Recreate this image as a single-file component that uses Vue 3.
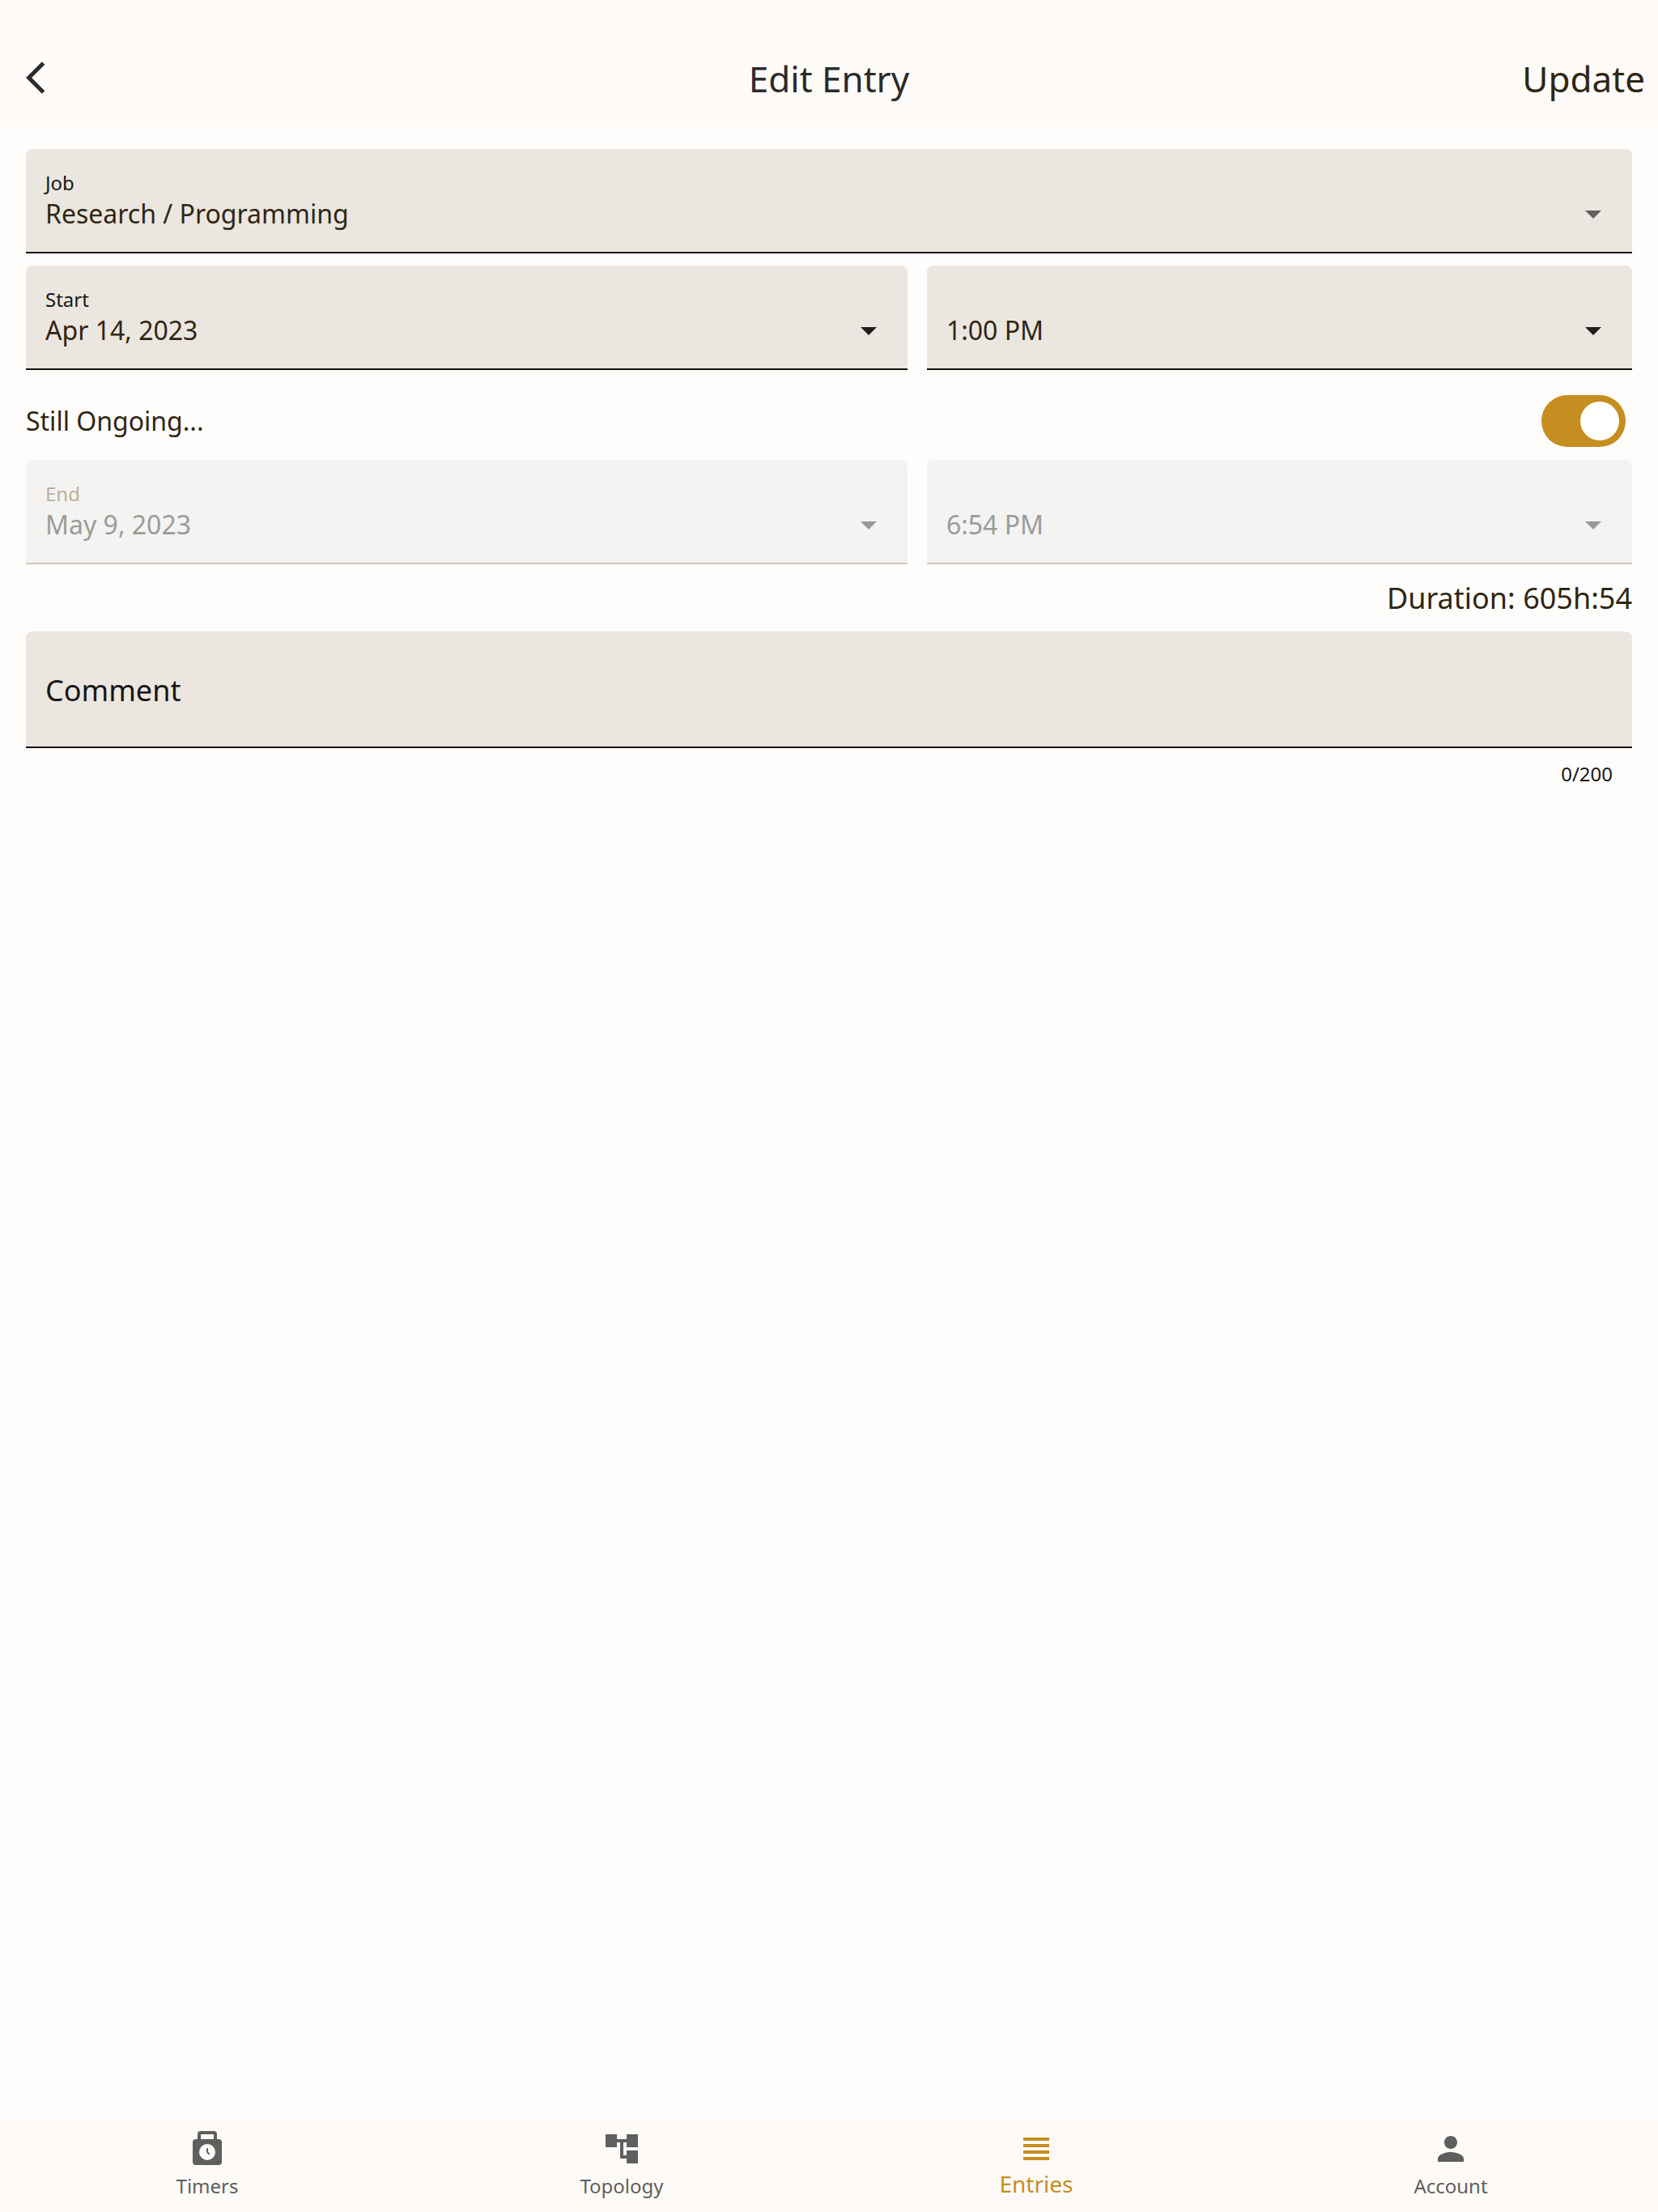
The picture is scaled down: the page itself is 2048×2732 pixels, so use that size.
<script setup>
import { computed, ref } from 'vue'

const COMMENT_LIMIT = 200

const job = ref('Research / Programming')
const startDate = ref('Apr 14, 2023')
const startTime = ref('1:00 PM')
const endDate = ref('May 9, 2023')
const endTime = ref('6:54 PM')
const ongoing = ref(true)
const comment = ref('')

const commentCount = computed(() => `${comment.value.length}/${COMMENT_LIMIT}`)

const tabs = [
  {
    name: 'Timers',
    href: '#timers',
    icon: 'M8 1h8a2 2 0 0 1 2 2v3h1a2 2 0 0 1 2 2v12a2 2 0 0 1-2 2H5a2 2 0 0 1-2-2V8a2 2 0 0 1 2-2h1V3a2 2 0 0 1 2-2zm0 2v3h8V3zm4 6a5 5 0 1 0 0 10a5 5 0 0 0 0-10zm-.5 2.6h1v2.2l1.2 1.4-.7.6-1.5-1.7z',
  },
  {
    name: 'Topology',
    href: '#topology',
    icon: 'M22 11V3h-7v3H9V3H2v8h7V8h2v10h4v3h7v-8h-7v3h-2V8h2v3z',
  },
  {
    name: 'Entries',
    href: '#entries',
    active: true,
    icon: 'M4 15h16v-2H4v2zm0 4h16v-2H4v2zm0-8h16V9H4v2zm0-6v2h16V5H4z',
  },
  {
    name: 'Account',
    href: '#account',
    icon: 'M12 12c2.21 0 4-1.79 4-4s-1.79-4-4-4-4 1.79-4 4 1.79 4 4 4zm0 2c-2.67 0-8 1.34-8 4v2h16v-2c0-2.66-5.33-4-8-4z',
  },
]
</script>

<template>
  <div class="page">
    <header class="toolbar">
      <button class="back" type="button" aria-label="Back">
        <svg viewBox="0 0 24 24" aria-hidden="true">
          <path d="M11.67 3.87 9.9 2.1 0 12l9.9 9.9 1.77-1.77L3.54 12z" />
        </svg>
      </button>
      <h1 class="title">Edit Entry</h1>
      <button class="update" type="submit" form="entry">Update</button>
    </header>

    <main class="content">
      <form id="entry" @submit.prevent>
        <div class="field muted-arrow">
          <label class="field-label" for="job">Job</label>
          <select id="job" v-model="job" class="field-select">
            <option>Research / Programming</option>
          </select>
          <svg class="arrow" viewBox="0 0 20 10" aria-hidden="true"><path d="M0 0h20L10 10z" /></svg>
        </div>

        <div class="row spaced">
          <div class="field">
            <label class="field-label" for="start-date">Start</label>
            <select id="start-date" v-model="startDate" class="field-select">
              <option>Apr 14, 2023</option>
            </select>
            <svg class="arrow" viewBox="0 0 20 10" aria-hidden="true"><path d="M0 0h20L10 10z" /></svg>
          </div>
          <div class="field">
            <select v-model="startTime" class="field-select" aria-label="Start time">
              <option>1:00 PM</option>
            </select>
            <svg class="arrow" viewBox="0 0 20 10" aria-hidden="true"><path d="M0 0h20L10 10z" /></svg>
          </div>
        </div>

        <div class="switch-row spaced">
          <label for="ongoing">Still Ongoing...</label>
          <input id="ongoing" v-model="ongoing" class="switch" type="checkbox" role="switch" />
        </div>

        <div class="row">
          <div class="field" :class="{ disabled: ongoing }">
            <label class="field-label" for="end-date">End</label>
            <select id="end-date" v-model="endDate" class="field-select" :disabled="ongoing">
              <option>May 9, 2023</option>
            </select>
            <svg class="arrow" viewBox="0 0 20 10" aria-hidden="true"><path d="M0 0h20L10 10z" /></svg>
          </div>
          <div class="field" :class="{ disabled: ongoing }">
            <select v-model="endTime" class="field-select" aria-label="End time" :disabled="ongoing">
              <option>6:54 PM</option>
            </select>
            <svg class="arrow" viewBox="0 0 20 10" aria-hidden="true"><path d="M0 0h20L10 10z" /></svg>
          </div>
        </div>

        <p class="duration">Duration: 605h:54</p>

        <div class="field">
          <label v-show="!comment" class="comment-label" for="comment">Comment</label>
          <input id="comment" v-model="comment" class="comment-input" type="text" :maxlength="COMMENT_LIMIT" />
        </div>
        <p class="counter">{{ commentCount }}</p>
      </form>
    </main>

    <nav class="tabs">
      <a
        v-for="tab in tabs"
        :key="tab.name"
        class="tab"
        :class="{ active: tab.active }"
        :href="tab.href"
        :aria-current="tab.active ? 'page' : undefined"
      >
        <svg viewBox="0 0 24 24" aria-hidden="true"><path :d="tab.icon" fill-rule="evenodd" /></svg>
        <span>{{ tab.name }}</span>
      </a>
    </nav>
  </div>
</template>

<style>
body {
  margin: 0;
}
</style>

<style scoped>
.page {
  --surface: #fefdfc;
  --bar: #fefaf8;
  --fill: #ebe6df;
  --ink: #302613;
  --accent: #c68d21;
  display: flex;
  flex-direction: column;
  min-height: 100vh;
  background: var(--surface);
  color: var(--ink);
  font-family: "Noto Sans", sans-serif;
  font-size: 32px;
  line-height: 44px;
}

button,
input,
select {
  margin: 0;
  border: 0;
  padding: 0;
  background: none;
  color: inherit;
  font: inherit;
}

.toolbar {
  display: grid;
  grid-template-columns: 1fr auto 1fr;
  align-items: center;
  height: 112px;
  padding: 40px 16px 0;
  background: var(--bar);
  font-size: 44px;
  line-height: 60px;
}

.back {
  justify-self: start;
  display: flex;
  padding-left: 16px;
  color: #2b2b2d;
}

.back svg {
  width: 48px;
  height: 48px;
  fill: currentColor;
}

.title {
  margin: 0;
  padding-top: 2px;
  color: #2b2b2d;
  font-size: 44px;
  font-weight: 400;
}

.update {
  justify-self: end;
  padding-top: 2px;
}

.content {
  flex: 1;
  padding: 32px;
}

.row {
  display: grid;
  grid-template-columns: 5fr 4fr;
  column-gap: 24px;
}

.spaced {
  margin-top: 15px;
}

/* Label, control and arrow share one grid cell so the whole box is clickable. */
.field {
  display: grid;
  border-bottom: 2px solid #14110f;
  border-radius: 8px 8px 0 0;
  background: var(--fill);
}

.field > * {
  grid-area: 1 / 1;
}

.field-label {
  place-self: start;
  padding: 26px 24px 0;
  color: #161616;
  font-size: 24px;
  line-height: 32px;
}

.field-select {
  appearance: none;
  width: 100%;
  padding: 58px 72px 25px 24px;
  border-radius: 0;
  opacity: 1;
}

.arrow {
  place-self: start end;
  width: 20px;
  height: 10px;
  margin: 76px 38px 0 0;
  fill: #1f1f1d;
  pointer-events: none;
}

.muted-arrow .arrow {
  fill: #62625f;
}

.disabled {
  border-bottom-color: #cec7bb;
  background: #f4f3f2;
}

.disabled .field-label {
  color: #bab09a;
}

.disabled .field-select {
  color: #9b9b99;
}

.disabled .arrow {
  fill: #999997;
}

.switch-row {
  display: flex;
  align-items: center;
  justify-content: space-between;
  min-height: 96px;
  padding-right: 8px;
}

.switch {
  appearance: none;
  display: flex;
  box-sizing: border-box;
  width: 104px;
  height: 64px;
  padding: 8px;
  border-radius: 32px;
  background: #b8b2a8;
}

.switch::before {
  content: "";
  width: 48px;
  height: 48px;
  border-radius: 50%;
  background: #fff;
}

.switch:checked {
  justify-content: flex-end;
  background: var(--accent);
}

.duration {
  margin: 0;
  padding: 17px 0 16px;
  font-size: 36px;
  line-height: 50px;
  text-align: right;
}

.comment-label,
.comment-input {
  padding: 48px 24px 44px;
  font-size: 36px;
  line-height: 50px;
}

.comment-label {
  color: #161616;
  pointer-events: none;
}

.comment-input {
  height: 50px;
}

.counter {
  margin: 0;
  padding: 16px 24px 0;
  color: #161616;
  font-size: 24px;
  line-height: 32px;
  text-align: right;
}

.tabs {
  display: flex;
  background: var(--bar);
}

.tab {
  flex: 1;
  display: flex;
  flex-direction: column;
  align-items: center;
  gap: 6px;
  padding: 14px 0 16px;
  color: #5f5f5d;
  font-size: 24px;
  line-height: 32px;
  text-decoration: none;
}

.tab svg {
  width: 48px;
  height: 48px;
  fill: currentColor;
}

.tab.active {
  color: var(--accent);
  font-size: 28px;
  line-height: 26px;
}
</style>
